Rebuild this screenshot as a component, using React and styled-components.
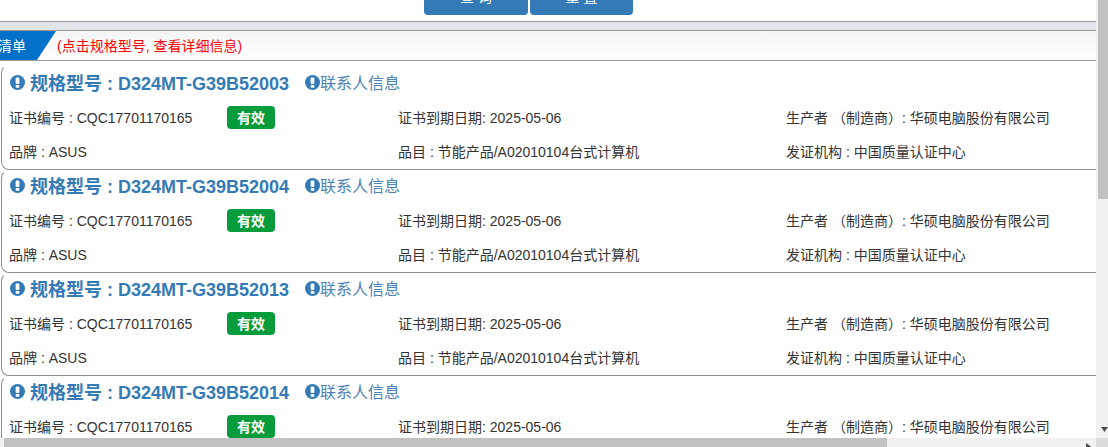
import React from 'react';
import styled, { createGlobalStyle } from 'styled-components';

const Global = createGlobalStyle`
  html, body { margin: 0; padding: 0; overflow: hidden; background: #fff; }
  body { font-family: "Liberation Sans", "Noto Sans CJK SC", sans-serif; font-size: 14px; color: #333; }
`;
const Frame = styled.div`
  width: 1108px; height: 447px; display: grid;
  grid-template-columns: 1096px 12px; grid-template-rows: 438px 9px; overflow: hidden;
`;
const Page = styled.main`overflow: hidden; min-width: 0;`;
const Toolbar = styled.div`
  height: 21px; display: flex; justify-content: center; align-items: flex-end; gap: 2px;
  padding: 0 39px 6px 0; box-sizing: border-box; overflow: hidden;
`;
const QueryButton = styled.button`
  flex: none; width: ${p => p.$w}px; height: 34px; border: 0; border-radius: 4px;
  background: #337ab7; color: #fff; font: 14px "Liberation Sans", "Noto Sans CJK SC", sans-serif;
  padding: 0 0 4px;
`;
const Divider = styled.div`
  height: 8px; background: #e1e5e9; border-top: 1px solid #999; border-bottom: 1px solid #999;
`;
const Header = styled.div`
  height: 29px; display: flex; align-items: center; border-bottom: 1px solid #999;
  background: linear-gradient(#f4f4f4, #fff);
`;
const Tag = styled.div`
  flex: none; width: 56px; height: 29px; box-sizing: border-box; padding: 0 30px 1px 0; background: #0070c9; color: #fff; font-size: 14px;
  display: flex; align-items: center; justify-content: flex-end; white-space: nowrap;
  clip-path: polygon(0 0, 100% 0, 37px 100%, 0 100%);
`;
const Hint = styled.span`color: #f00; font-size: 14px; margin: 0 0 1px 1px;`;
const List = styled.div`padding: 4px 0 0 1px;`;
const Card = styled.article`
  height: ${p => (p.$first ? 105 : 103)}px; box-sizing: border-box;
  border: 1px solid #8f8f8f; border-top-color: transparent; border-right: 0; border-radius: 8px 0 0 8px;
  padding: ${p => (p.$first ? 2 : 0)}px 0 0 8px;
`;
const Title = styled.div`
  height: 28px; margin-bottom: 4px; display: flex; align-items: center;
`;
const Model = styled.h3`
  margin: 0; font-size: 18px; font-weight: 700; display: flex; align-items: center; gap: 5px; color: #337ab7; width: 295px; white-space: nowrap;
`;
const Contact = styled.a`
  font-size: 16px; display: flex; align-items: center; color: #4a82b5; white-space: nowrap;
`;
const Row = styled.div`
  display: grid; grid-template-columns: 389px 388px 1fr; height: 34px; margin-left: -1px; align-items: center; white-space: nowrap; color: #333;
`;
const Cell = styled.div`display: flex; align-items: center;`;
const CertNo = styled.span`width: 218px;`;
const Badge = styled.span`
  width: 48px; height: 23px; border-radius: 4px; background: #079c3b; color: #fff; font-weight: 700;
  display: inline-flex; align-items: center; justify-content: center; font-size: 14px;
`;
const VBar = styled.div`
  background: #f1f1f1; position: relative; display: flex; justify-content: flex-end;
`;
const VThumb = styled.div`width: 10px; height: 199px; background: #c1c1c1;`;
const DownArrow = styled.svg`position: absolute; left: 5px; top: 427px; width: 7px; height: 5px;`;
const RightArrow = styled.svg`position: absolute; left: 1086px; top: 5px; width: 5px; height: 7px;`;
const HBar = styled.div`background: #f1f1f1; position: relative; padding-left: 4px; overflow: hidden;`;
const HThumb = styled.div`width: 883px; height: 9px; background: #c1c1c1;`;
const Corner = styled.div`background: #dcdcdc;`;

const Icon = ({ size }) => (
  <svg width={size} height={size} viewBox="0 0 16 16" aria-hidden="true" style={{ flex: 'none' }}>
    <circle cx="8" cy="8" r="8" fill="#337ab7" />
    <rect x="6" y="2.6" width="4" height="7" rx="1" fill="#fff" />
    <rect x="6.1" y="10.6" width="3.8" height="3" rx=".6" fill="#fff" />
  </svg>
);

const models = ['D324MT-G39B52003', 'D324MT-G39B52004', 'D324MT-G39B52013', 'D324MT-G39B52014'];

export default function App() {
  return (
    <>
      <Global />
      <Frame>
        <Page>
          <Toolbar>
            <QueryButton $w={104}>查 询</QueryButton>
            <QueryButton $w={103}>重 置</QueryButton>
          </Toolbar>
          <Divider />
          <Header>
            <Tag>清单</Tag>
            <Hint>(点击规格型号, 查看详细信息)</Hint>
          </Header>
          <List>
            {models.map((m, i) => (
              <Card key={m} $first={i === 0}>
                <Title>
                  <Model><Icon size={15} />规格型号 : {m}</Model>
                  <Contact><Icon size={15} />联系人信息</Contact>
                </Title>
                <Row>
                  <Cell><CertNo>证书编号 : CQC17701170165</CertNo><Badge>有效</Badge></Cell>
                  <Cell>证书到期日期: 2025-05-06</Cell>
                  <Cell>生产者 （制造商）: 华硕电脑股份有限公司</Cell>
                </Row>
                <Row>
                  <Cell>品牌 : ASUS</Cell>
                  <Cell>品目 : 节能产品/A02010104台式计算机</Cell>
                  <Cell>发证机构 : 中国质量认证中心</Cell>
                </Row>
              </Card>
            ))}
          </List>
        </Page>
        <VBar>
          <VThumb />
          <DownArrow viewBox="0 0 7 5"><path d="M0 0h7L3.5 5z" fill="#505050" /></DownArrow>
        </VBar>
        <HBar>
          <HThumb />
          <RightArrow viewBox="0 0 5 7"><path d="M0 0v7l5-3.5z" fill="#505050" /></RightArrow>
        </HBar>
        <Corner />
      </Frame>
    </>
  );
}
